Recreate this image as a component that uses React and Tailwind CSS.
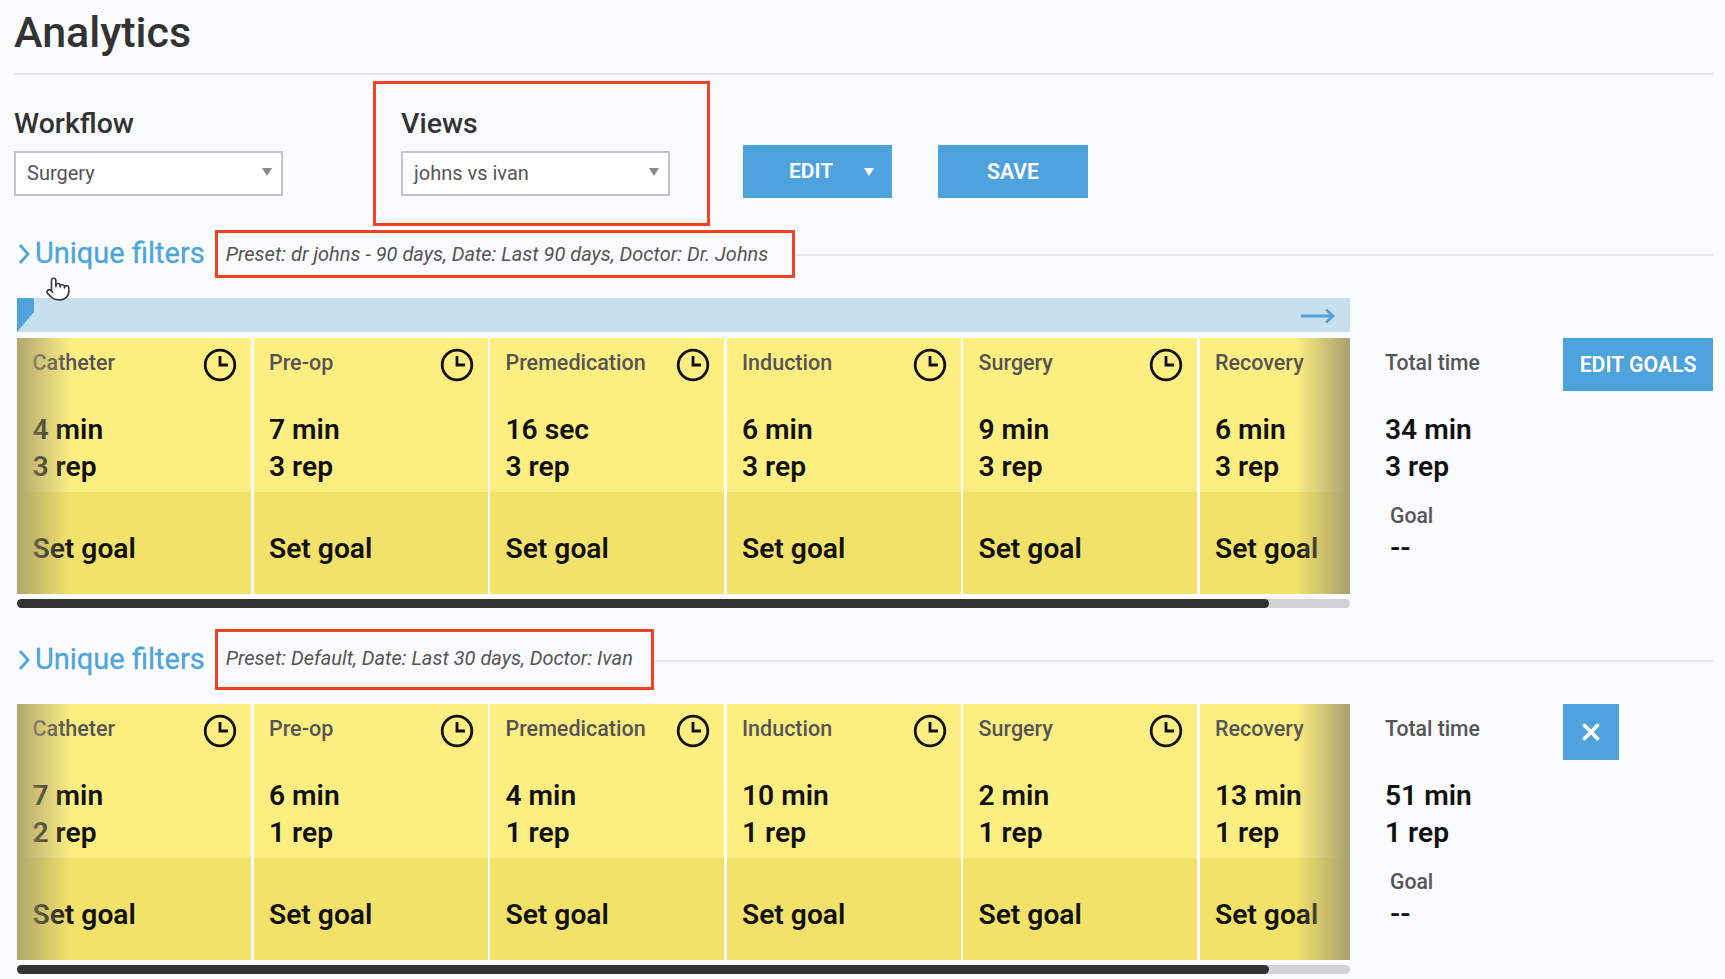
import React from 'react'
import { Pointer, X } from 'lucide-react'

const stages = ['Catheter', 'Pre-op', 'Premedication', 'Induction', 'Surgery', 'Recovery']

function Clock() {
  return (
    <svg width="34" height="34" viewBox="0 0 34 34" fill="none" stroke="#111" strokeWidth="2.8" className="shrink-0">
      <circle cx="17" cy="17" r="14.8" />
      <path d="M17 8v9h8" />
    </svg>
  )
}

function Caret({ className }) {
  return (
    <svg width="10" height="8" viewBox="0 0 10 8" className={className}>
      <path d="M0 0h10L5 8z" fill="currentColor" />
    </svg>
  )
}

function Select({ value }) {
  return (
    <div className="flex items-center justify-between w-[269px] h-[45px] bg-white border-2 border-[#c4c5c7] pl-[11px] pr-[9px] pb-[1px] text-[20px] text-[#555]">
      <span>{value}</span>
      <Caret className="text-[#8a8a8a] -mt-[2px]" />
    </div>
  )
}

function FilterHeader({ text, boxClass, lineClass }) {
  return (
    <div className="flex items-center pl-[3px]">
      <svg width="14" height="22" viewBox="0 0 14 22" fill="none" stroke="#4ea5d9" strokeWidth="2.8" className="shrink-0">
        <path d="M3 2l8 9-8 9" />
      </svg>
      <span className="ml-[4px] -mt-[2px] text-[29px] leading-[34px] text-[#4ea5d9] [-webkit-text-stroke:0.3px_#4ea5d9] whitespace-nowrap">Unique filters</span>
      <div className={`flex items-center border-[3.5px] border-[#f04326] pl-[8px] ml-[10px] italic text-[20px] text-[#555] whitespace-nowrap ${boxClass}`}>
        {text}
      </div>
      <div className={`flex-1 h-[2px] bg-[#e6e8eb] ${lineClass}`} />
    </div>
  )
}

function Card({ name, time, rep }) {
  return (
    <div className="w-[234px] shrink-0">
      <div className="h-[154px] bg-[#fdee82] pl-[15.500px] pr-[14px] pt-[10px]">
        <div className="flex items-start justify-between">
          <span className="mt-[1px] text-[21.5px] leading-[28px] font-medium text-[#555]">{name}</span>
          <Clock />
        </div>
        <div className="mt-[29px] text-[28.2px] leading-[37px] font-semibold text-[#111] whitespace-nowrap">
          <div>{time}</div>
          <div>{rep}</div>
        </div>
      </div>
      <div className="h-[102px] bg-[#f3e26a] pl-[15.500px] pt-[38px] text-[28.2px] leading-[37px] font-semibold text-[#111] whitespace-nowrap">
        Set goal
      </div>
    </div>
  )
}

function StageRow({ times, reps, total, totalRep, action }) {
  return (
    <div className="flex items-start">
      <div className="w-[1333px] ml-[3px] shrink-0">
        <div className="relative h-[256px] overflow-hidden">
          <div className="flex gap-[2.5px]">
            {stages.map((name, i) => (
              <Card key={name} name={name} time={times[i]} rep={reps[i]} />
            ))}
          </div>
          {/* scroll shadows over both ends of the strip */}
          <div className="absolute inset-y-0 left-0 w-[54px] bg-gradient-to-r from-[#a8a06ee6] to-transparent" />
          <div className="absolute inset-y-0 right-0 w-[54px] bg-gradient-to-l from-[#a8a06e] to-transparent" />
        </div>
        <div className="mt-[5px] h-[9px] bg-[#d2d3d4] rounded-full">
          <div className="w-[1252px] h-full bg-[#333] rounded-full" />
        </div>
      </div>
      <div className="w-[178px] ml-[35px] shrink-0 pt-[10px]">
        <div className="mt-[1px] text-[21.2px] leading-[28px] font-medium text-[#555]">Total time</div>
        <div className="mt-[34px] text-[28.2px] leading-[37px] font-semibold text-[#111]">
          <div>{total}</div>
          <div>{totalRep}</div>
        </div>
        <div className="mt-[17px] ml-[5px] text-[21.2px] leading-[28px] font-medium text-[#555]">Goal</div>
        <div className="mt-[-1px] ml-[5px] text-[28.2px] leading-[37px] font-semibold text-[#111]">--</div>
      </div>
      {action}
    </div>
  )
}

export default function App() {
  return (
    <div className="relative h-[979px] overflow-hidden bg-[#fafbfd] pl-[14px] pr-[12px] font-['Roboto',sans-serif]">
      <div className="h-[75px] border-b-2 border-[#e6e8eb]">
        <h1 className="pt-[8px] text-[43px] leading-[48px] font-medium text-[#333]">Analytics</h1>
      </div>

      <div className="flex items-start mt-[6px]">
        <div className="pt-[28px]">
          <div className="text-[28.5px] leading-[30px] font-medium text-[#333] mb-[12px]">Workflow</div>
          <Select value="Surgery" />
        </div>
        <div className="w-[337px] h-[145px] ml-[90px] border-[3px] border-[#f04326] pl-[25px] pt-[25px]">
          <div className="text-[28.5px] leading-[30px] font-medium text-[#333] mb-[12px]">Views</div>
          <Select value="johns vs ivan" />
        </div>
        <button className="relative w-[149px] h-[53px] mt-[64px] ml-[33px] pt-[1px] bg-[#4fa3dc] text-white text-[21px] font-semibold text-left pl-[46px]">
          EDIT
          <Caret className="absolute right-[16px] top-[23px] w-[14px] h-[8px]" />
        </button>
        <button className="w-[150px] h-[53px] mt-[64px] ml-[46px] pt-[1px] bg-[#4fa3dc] text-white text-[21.2px] font-semibold">
          SAVE
        </button>
      </div>

      <div className="mt-[4px]">
        <FilterHeader text="Preset: dr johns - 90 days, Date: Last 90 days, Doctor: Dr. Johns" boxClass="w-[580px] h-[48px]" lineClass="mt-[2px]" />
      </div>

      <div className="relative w-[1333px] h-[34px] mt-[20px] ml-[3px] bg-[#c8e0ee]">
        <svg width="17" height="34" viewBox="0 0 17 34" className="absolute left-0 top-0">
          <path d="M0 0h15q2 0 2 2v12L0 34z" fill="#4fa3dc" />
        </svg>
        <svg width="36" height="16" viewBox="0 0 36 16" fill="none" stroke="#4fa3dc" strokeWidth="2.8" className="absolute right-[14px] top-[10px]">
          <path d="M1 8h32M26 1.500l7 6.500-7 6.500" />
        </svg>
      </div>

      <div className="mt-[6px]">
        <StageRow
          times={['4 min', '7 min', '16 sec', '6 min', '9 min', '6 min']}
          reps={['3 rep', '3 rep', '3 rep', '3 rep', '3 rep', '3 rep']}
          total="34 min"
          totalRep="3 rep"
          action={
            <button className="w-[150px] h-[53px] shrink-0 pt-[1px] bg-[#4fa3dc] text-white text-[21.2px] font-semibold whitespace-nowrap">
              EDIT GOALS
            </button>
          }
        />
      </div>

      <div className="mt-[21px]">
        <FilterHeader text="Preset: Default, Date: Last 30 days, Doctor: Ivan" boxClass="w-[439px] h-[61px] pb-[3px]" lineClass="mt-[3px]" />
      </div>

      <div className="mt-[14px]">
        <StageRow
          times={['7 min', '6 min', '4 min', '10 min', '2 min', '13 min']}
          reps={['2 rep', '1 rep', '1 rep', '1 rep', '1 rep', '1 rep']}
          total="51 min"
          totalRep="1 rep"
          action={
            <button className="flex items-center justify-center w-[56px] h-[56px] shrink-0 bg-[#4fa3dc] text-white" aria-label="Remove">
              <X size={26} strokeWidth={3.5} />
            </button>
          }
        />
      </div>

      {/* mouse cursor in the capture */}
      <Pointer size={26} strokeWidth={1.4} className="absolute left-[45px] top-[276px] fill-white text-[#333]" />
    </div>
  )
}
